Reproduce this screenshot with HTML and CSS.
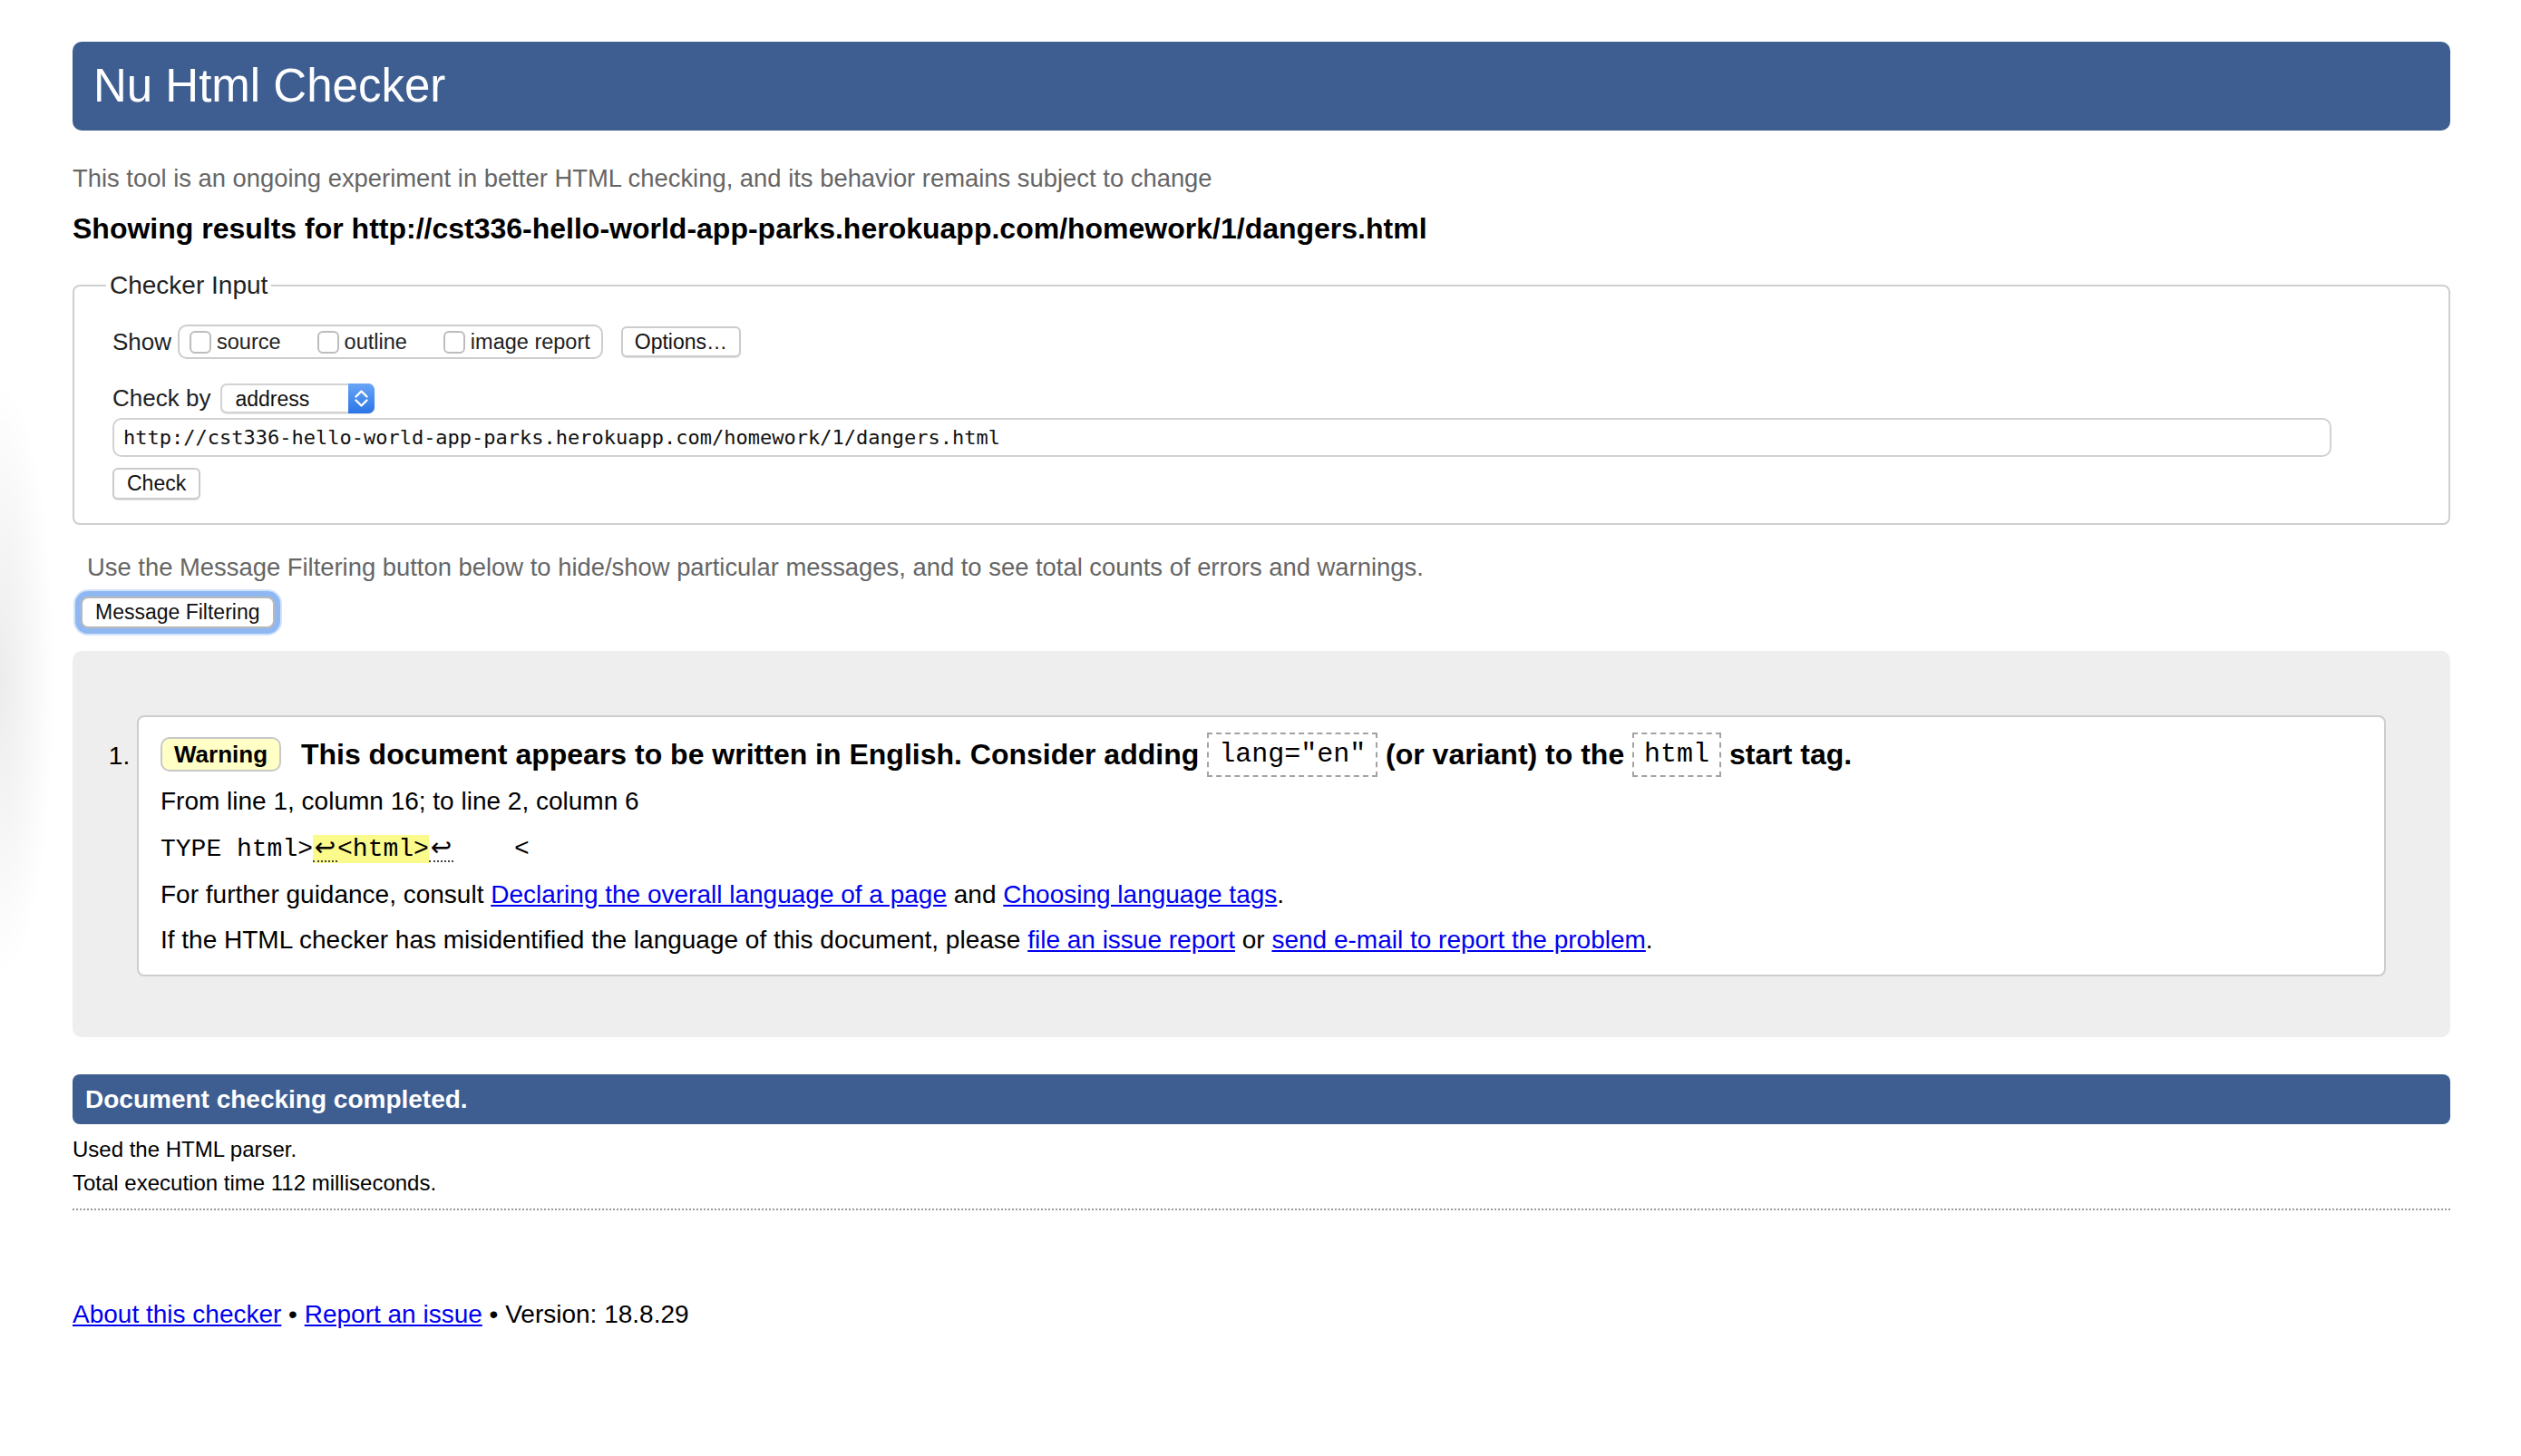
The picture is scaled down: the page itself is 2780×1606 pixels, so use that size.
FILE: index.html
```html
<!DOCTYPE html>
<html lang="en">
<head>
<meta charset="utf-8">
<title>Nu Html Checker</title>
<link rel="stylesheet" href="styles.css">
</head>
<body>
<div class="edge-shade"></div>
<h1 class="title">Nu Html Checker</h1>
<p class="intro">This tool is an ongoing experiment in better HTML checking, and its behavior remains subject to change</p>
<h2 class="showing">Showing results for http://cst336-hello-world-app-parks.herokuapp.com/homework/1/dangers.html</h2>
<form class="checker">
  <fieldset class="input-set">
    <legend class="legend">Checker Input</legend>
    <div class="row show-row">
      <span class="label">Show</span>
      <span class="opts">
        <label class="opt"><input type="checkbox" class="cb">source</label>
        <label class="opt"><input type="checkbox" class="cb">outline</label>
        <label class="opt"><input type="checkbox" class="cb">image report</label>
      </span>
      <button type="button" class="btn options-btn">Options…</button>
    </div>
    <div class="row checkby-row">
      <span class="label label-by">Check by</span>
      <span class="select-wrap">
        <select class="select"><option>address</option></select>
        <span class="stepper"><svg width="29" height="33" viewBox="0 0 29 33"><path d="M8.5 14.5 L14.5 8.5 L20.5 14.5" fill="none" stroke="#fff" stroke-width="2.4" stroke-linecap="round" stroke-linejoin="round"/><path d="M8.5 18.5 L14.5 24.5 L20.5 18.5" fill="none" stroke="#fff" stroke-width="2.4" stroke-linecap="round" stroke-linejoin="round"/></svg></span>
      </span>
    </div>
    <input class="url" type="text" value="http://cst336-hello-world-app-parks.herokuapp.com/homework/1/dangers.html">
    <button type="button" class="btn check-btn">Check</button>
  </fieldset>
</form>
<p class="filter-note">Use the Message Filtering button below to hide/show particular messages, and to see total counts of errors and warnings.</p>
<div class="filter-wrap"><button type="button" class="btn filter-btn">Message Filtering</button></div>
<div class="results">
  <ol class="messages">
    <li class="msg">
      <p class="msg-text"><strong class="badge">Warning</strong> This document appears to be written in English. Consider adding <code class="code">lang="en"</code> (or variant) to the <code class="code">html</code> start tag.</p>
      <p class="location">From line 1, column 16; to line 2, column 6</p>
      <p class="extract"><code class="ext">TYPE html&gt;<b class="hl"><span class="lf">↩</span>&lt;html&gt;</b><span class="lf">↩</span>    &lt;</code></p>
      <p class="info">For further guidance, consult <a href="#" class="link">Declaring the overall language of a page</a> and <a href="#" class="link">Choosing language tags</a>.</p>
      <p class="info">If the HTML checker has misidentified the language of this document, please <a href="#" class="link">file an issue report</a> or <a href="#" class="link">send e-mail to report the problem</a>.</p>
    </li>
  </ol>
</div>
<div class="completion">
  <h2 class="done">Document checking completed.</h2>
  <p class="stat">Used the HTML parser.</p>
  <p class="stat stat-2">Total execution time 112 milliseconds.</p>
</div>
<hr class="rule">
<p class="footer"><a href="#" class="link">About this checker</a> • <a href="#" class="link">Report an issue</a> • Version: 18.8.29</p>
</body>
</html>
```

FILE: styles.css
```css
html {
  background: #fff;
}

body {
  margin: 0;
  padding: 0 78px 0 80px;
  font-family: "Liberation Sans", Arial, Helvetica, sans-serif;
  font-size: 28px;
  color: #000;
}

.edge-shade {
  position: fixed;
  left: 0;
  top: 420px;
  width: 80px;
  height: 660px;
  background: radial-gradient(ellipse 60px 330px at 0 50%, rgba(0, 0, 0, 0.075), rgba(0, 0, 0, 0));
  pointer-events: none;
}

.title {
  margin: 46px 0 0;
  height: 98px;
  line-height: 98px;
  padding: 0 23px;
  background: #3e5e91;
  color: #fff;
  font-size: 51px;
  font-weight: normal;
  border-radius: 10px;
}

.intro {
  margin: 36px 0 0;
  font-size: 27.4px;
  line-height: 34px;
  color: #666;
}

.showing {
  margin: 19px 0 0;
  font-size: 32px;
  line-height: 38px;
  font-weight: bold;
}

.checker {
  margin: 0;
}

.input-set {
  margin: 28px 0 0;
  min-width: 0;
  border: 2px solid #cfcfcf;
  border-radius: 8px;
  padding: 27px 40px 26px 42px;
}

.legend {
  font-size: 28px;
  line-height: 32px;
  padding: 0 4px;
  margin-left: -7px;
  color: #222;
}

.row {
  display: flex;
  align-items: center;
}

.show-row {
  height: 38px;
}

.checkby-row {
  height: 34px;
  margin-top: 26px;
}

.label {
  font-size: 26px;
  color: #222;
  margin-right: 7px;
}

.label-by {
  margin-right: 11px;
}

.opts {
  display: inline-flex;
  align-items: center;
  box-sizing: border-box;
  height: 38px;
  padding: 0 12px 0 11px;
  border: 2px solid #cdcdcd;
  border-radius: 10px;
}

.opt {
  display: inline-flex;
  align-items: center;
  gap: 6px;
  font-size: 23.5px;
  color: #222;
}

.opt + .opt {
  margin-left: 40px;
}

.cb {
  appearance: none;
  -webkit-appearance: none;
  margin: 0;
  width: 24px;
  height: 25px;
  box-sizing: border-box;
  border: 2px solid #bdbdbd;
  border-radius: 6px;
  background: #fff;
}

.btn {
  font-family: "Liberation Sans", Arial, Helvetica, sans-serif;
  font-size: 23px;
  color: #111;
  background: #fff;
  border: 2px solid #cbcbcb;
  border-radius: 6px;
  box-shadow: 0 1px 1px rgba(0, 0, 0, 0.12);
  box-sizing: border-box;
  margin: 0;
}

.options-btn {
  height: 34px;
  padding: 0 13px;
  margin-left: 20px;
}

.select-wrap {
  position: relative;
  display: inline-block;
  width: 170px;
  height: 33px;
}

.select {
  appearance: none;
  -webkit-appearance: none;
  box-sizing: border-box;
  width: 170px;
  height: 33px;
  margin: 0;
  padding: 0 0 0 14px;
  font-family: "Liberation Sans", Arial, Helvetica, sans-serif;
  font-size: 23px;
  color: #111;
  background: #fff;
  border: 2px solid #d2d2d2;
  border-radius: 7px;
  box-shadow: 0 1px 1px rgba(0, 0, 0, 0.1);
}

.stepper {
  position: absolute;
  right: 0;
  top: 0;
  width: 29px;
  height: 33px;
  background: linear-gradient(#6aa6f7, #2a74e6);
  border-radius: 0 7px 7px 0;
}

.stepper svg {
  display: block;
}

.url {
  display: block;
  box-sizing: border-box;
  width: 2447px;
  height: 43px;
  margin: 5px 0 0;
  padding: 0 10px;
  font-family: "DejaVu Sans Mono", "Liberation Mono", monospace;
  font-size: 22px;
  color: #111;
  border: 2px solid #d2d2d2;
  border-radius: 10px;
  background: #fff;
}

.check-btn {
  display: block;
  height: 35px;
  padding: 0 14px;
  margin-top: 12px;
}

.filter-note {
  margin: 30px 0 0;
  padding-left: 16px;
  font-size: 27.4px;
  line-height: 34px;
  color: #666;
}

.filter-wrap {
  margin-top: 15px;
  padding-left: 9px;
  height: 35px;
}

.filter-btn {
  height: 35px;
  padding: 0 14px;
  border-color: #b8b8b8;
  border-radius: 8px;
  box-shadow: 0 0 0 6px #8fb8f2, 0 0 0 8px #d3e3fb;
}

.results {
  margin-top: 25px;
  background: #eee;
  border-radius: 10px;
  padding: 71px 71px 67px 71px;
}

.messages {
  margin: 0;
  padding: 0;
  list-style: decimal outside;
}

.msg {
  background: #fff;
  border: 2px solid #cdcdcd;
  border-radius: 8px;
  padding: 17px 20px 21px 24px;
  font-size: 28px;
}

.msg p {
  margin: 0;
}

.msg-text {
  font-size: 32px;
  line-height: 48px;
  font-weight: bold;
}

.badge {
  display: inline-block;
  vertical-align: 2px;
  font-size: 26px;
  line-height: 30px;
  padding: 2px 13px;
  margin-right: 13px;
  background: #ffffc6;
  border: 2px solid #c8c8c8;
  border-radius: 10px;
}

.code {
  display: inline-block;
  vertical-align: 3px;
  font-family: "Liberation Mono", "Courier New", monospace;
  font-size: 30px;
  font-weight: normal;
  line-height: 45px;
  padding: 0 11px;
  border: 2px dashed #a3a3a3;
}

.msg .location {
  margin-top: 10px;
  line-height: 34px;
}

.msg .extract {
  margin-top: 17px;
  line-height: 34px;
}

.ext {
  font-family: "Liberation Mono", "Courier New", monospace;
  font-size: 28px;
  white-space: pre;
}

.hl {
  font-weight: normal;
  background: #fbfb8c;
}

.lf {
  display: inline-block;
  width: 27px;
  text-align: center;
  line-height: 28px;
  font-family: "DejaVu Sans", sans-serif;
  font-size: 28px;
  border-bottom: 2px dotted #444;
}

.msg .info {
  margin-top: 16px;
  line-height: 34px;
}

.link {
  color: #0000ee;
  text-decoration: underline;
}

.completion {
  margin-top: 41px;
}

.done {
  margin: 0;
  height: 55px;
  line-height: 55px;
  padding: 0 14px;
  background: #3e5e91;
  color: #fff;
  font-size: 28px;
  font-weight: bold;
  border-radius: 8px;
}

.stat {
  margin: 14px 0 0;
  font-size: 24px;
  line-height: 28px;
}

.stat-2 {
  margin-top: 9px;
}

.rule {
  margin: 14px 0 0;
  border: 0;
  border-top: 2px dotted #9a9a9a;
  height: 0;
}

.footer {
  margin: 98px 0 0;
  font-size: 28px;
  line-height: 34px;
}
```
